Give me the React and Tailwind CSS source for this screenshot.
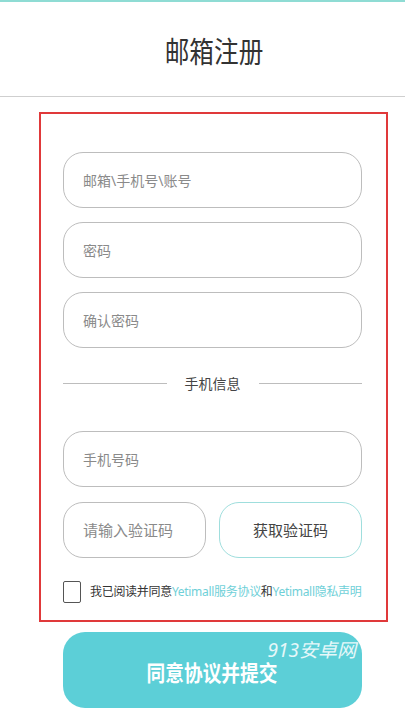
import React, { useState } from "react";

const font = { fontFamily: '"Noto Sans", "Noto Sans CJK SC", sans-serif' };

function Field({ placeholder, type = "text", className = "" }) {
  return (
    <input
      type={type}
      placeholder={placeholder}
      className={
        "h-[56px] rounded-[20px] border border-[#bdbdbd] bg-white px-[19px] text-[14px] text-[#333] placeholder:text-[#8a8a8a] outline-none " +
        className
      }
    />
  );
}

export default function App() {
  const [agreed, setAgreed] = useState(false);

  return (
    <div className="min-h-[720px] bg-white" style={font}>
      {/* top accent */}
      <div className="h-[2px] bg-[#8fdcd4]" />

      {/* header */}
      <div className="flex h-[95px] items-center justify-center border-b border-[#cfcfcf] pl-[24px] pt-[6px]">
        <h1 className="inline-block scale-x-[0.85] text-[29px] text-[#333]">邮箱注册</h1>
      </div>

      {/* form box */}
      <div className="ml-[39px] mt-[15px] w-[349px] border-2 border-[#e0393a] pl-[22px] pr-[24px] pt-[38px] pb-[17px]">
        <div className="flex flex-col gap-[14px]">
          <Field placeholder="邮箱\手机号\账号" />
          <Field placeholder="密码" type="password" />
          <Field placeholder="确认密码" type="password" />
        </div>

        <div className="mt-[25px] flex h-[20px] items-center">
          <div className="h-px flex-1 bg-[#bdbdbd]" />
          <span className="px-[18px] text-[14px] text-[#444]">手机信息</span>
          <div className="h-px flex-1 bg-[#bdbdbd]" />
        </div>

        <div className="mt-[38px] flex flex-col">
          <Field placeholder="手机号码" />
          <div className="mt-[15px] flex gap-[13px]">
            <Field placeholder="请输入验证码" className="w-[143px] min-w-0 flex-none text-[15px]" />
            <button className="h-[56px] flex-1 rounded-[20px] border border-[#9fdedd] bg-white text-[15px] text-[#444]">
              获取验证码
            </button>
          </div>
        </div>

        <label className="mt-[23px] flex items-center gap-[9px]">
          <input
            type="checkbox"
            checked={agreed}
            onChange={(e) => setAgreed(e.target.checked)}
            className="h-[22px] w-[18px] shrink-0 appearance-none rounded-[2px] border-[1.5px] border-[#555] bg-white checked:bg-[#5ccfd7]"
          />
          <span className="whitespace-nowrap text-[12px] tracking-[-0.3px] text-[#333]">
            我已阅读并同意
            <span className="text-[#6fd0d8]">Yetimall服务协议</span>和
            <span className="text-[#6fd0d8]">Yetimall隐私声明</span>
          </span>
        </label>
      </div>

      {/* submit */}
      <div className="pl-[63px] pr-[43px] pt-[10px]">
        <button className="relative flex h-[76px] w-full items-center justify-center rounded-[22px] bg-[#5ccfd7] pt-[4px]">
          <span className="inline-block scale-x-[0.85] text-[22px] font-bold text-white">同意协议并提交</span>
          <span className="absolute right-[6px] top-[4px] text-[19px] italic text-white/85">913安卓网</span>
        </button>
      </div>
    </div>
  );
}
